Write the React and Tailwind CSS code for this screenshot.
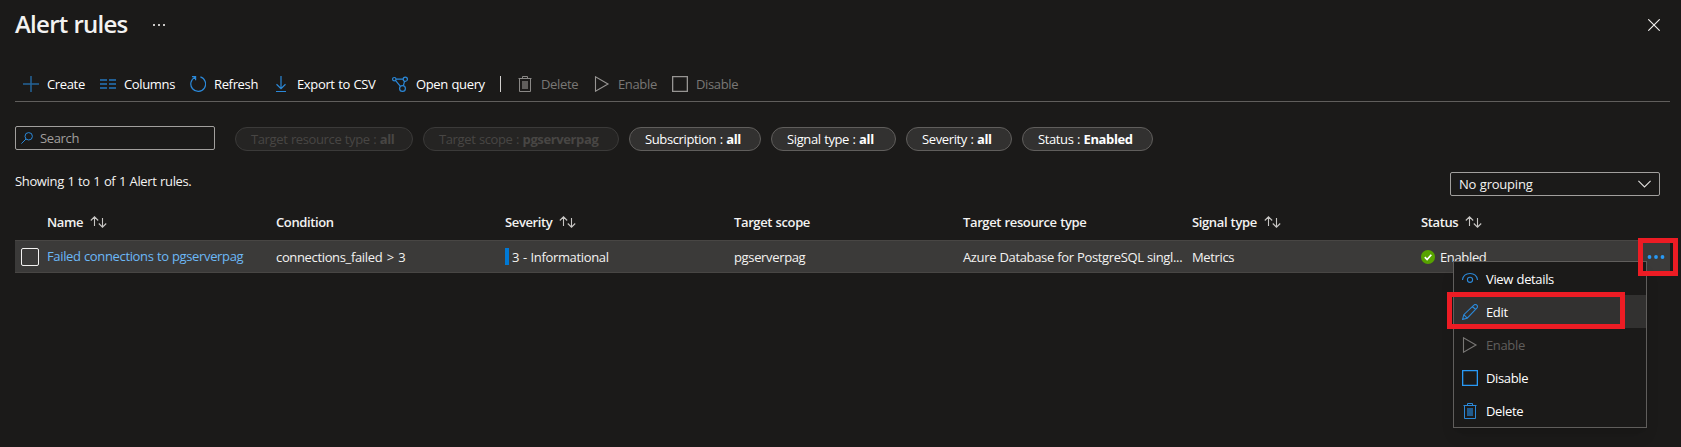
const W = {
  plus: (
    <svg viewBox="0 0 16 16" className="size-4 shrink-0" fill="none" stroke="#246499" strokeWidth="1.5">
      <path d="M8 0v16M0 8h16" />
    </svg>
  ),
  columns: (
    <svg viewBox="0 0 16 16" className="size-4 shrink-0" fill="#225f94">
      <path d="M0 3h7v2H0zM9 3h7v2H9zM0 7h7v2H0zM9 7h7v2H9zM0 11h7v2H0zM9 11h7v2H9z" />
    </svg>
  ),
  refresh: (
    <svg viewBox="0 0 16 16" className="size-4 shrink-0" fill="none" stroke="#2b88d8" strokeWidth="1.2">
      <path d="M10.4 .9A7.4 7.4 0 1 1 5.200 1.200M2 .6h3.600v3.600" />
    </svg>
  ),
  download: (
    <svg viewBox="0 0 16 16" className="size-4 shrink-0" fill="none" stroke="#2b88d8" strokeWidth="1.2">
      <path d="M8 0v12.5M3.5 8.2 8 12.6l4.500-4.400M3 15.500h10" />
    </svg>
  ),
  query: (
    <svg viewBox="0 0 16 16" className="size-4 shrink-0" fill="none" stroke="#2b88d8" strokeWidth="1.2">
      <circle cx="2.300" cy="3.200" r="1.700" />
      <circle cx="13.300" cy="3.200" r="2.100" />
      <circle cx="10.500" cy="12.500" r="2.900" />
      <path d="M4 3.200h7.200M3.500 4.400l4.900 5.900M12.600 5.200l-1.200 4.400" />
    </svg>
  ),
};

function Trash({ line, fill }) {
  return (
    <svg viewBox="0 0 16 16" className="size-4 shrink-0" fill="none" stroke={line}>
      <path d="M1.500 2.500h13M5.500 2.500v-2h5v2M2.500 2.500v13h11v-13" />
      <path d="M5 5h6v8H5z" fill={fill} stroke="none" />
    </svg>
  );
}

function Play({ line }) {
  return (
    <svg viewBox="0 0 16 16" className="size-4 shrink-0" fill="none" stroke={line} strokeWidth="1.1">
      <path d="M1.500 .8v14.400L14 8z" />
    </svg>
  );
}

function Square({ line }) {
  return (
    <svg viewBox="0 0 16 16" className="size-4 shrink-0" fill="none" stroke={line} strokeWidth="1.3">
      <path d="M.65 .65h14.700v14.700H.65z" />
    </svg>
  );
}

function Eye() {
  return (
    <svg viewBox="0 0 16 16" className="size-4 shrink-0" fill="none" stroke="#2b88d8" strokeWidth="1.1">
      <path d="M.5 9C1 4.800 4 2.500 8 2.500S15 4.800 15.500 9" />
      <circle cx="8" cy="8.800" r="2.600" />
    </svg>
  );
}

function Pencil() {
  return (
    <svg viewBox="0 0 16 16" className="size-4 shrink-0" fill="none" stroke="#2b88d8" strokeWidth="1.1">
      <path d="M.6 15.400l1.200-4.700L11.900 1.200a1.900 1.900 0 0 1 2.900 2.900L5.200 14.200zM10.500 2.500l3 3M1.800 10.700l3.400 3.500" />
    </svg>
  );
}

function Sort() {
  return (
    <svg viewBox="0 0 17 12" className="ml-[7px] h-3 w-[17px] shrink-0" fill="none" stroke="#c8c6c4" strokeWidth="1.100">
      <path d="M4.500 10V.8M.8 4.500 4.500.8l3.700 3.700M12.500 2v9.200M8.800 7.500l3.700 3.700 3.700-3.700" />
    </svg>
  );
}

const tools = [
  { icon: W.plus, label: "Create", w: "w-[37px]" },
  { icon: W.columns, label: "Columns", w: "w-[50px]" },
  { icon: W.refresh, label: "Refresh", w: "w-[43px]" },
  { icon: W.download, label: "Export to CSV", w: "w-[79px]" },
  { icon: W.query, label: "Open query", w: "w-[68px]" },
];

const offTools = [
  { icon: <Trash line="#8a8886" fill="#605e5c" />, label: "Delete", w: "w-[37px]" },
  { icon: <Play line="#979593" />, label: "Enable", w: "w-[38px]" },
  { icon: <Square line="#979593" />, label: "Disable", w: "w-[42px]" },
];

const pills = [
  { k: "Target resource type", v: "all", w: "w-[178px]", off: true },
  { k: "Target scope", v: "pgserverpag", w: "w-[196px]", off: true },
  { k: "Subscription", v: "all", w: "w-[132px]" },
  { k: "Signal type", v: "all", w: "w-[125px]" },
  { k: "Severity", v: "all", w: "w-[106px]" },
  { k: "Status", v: "Enabled", w: "w-[131px]" },
];

const heads = [
  ["Name", true],
  ["Condition", false],
  ["Severity", true],
  ["Target scope", false],
  ["Target resource type", false],
  ["Signal type", true],
  ["Status", true],
];

const menu = [
  { icon: <Eye />, label: "View details" },
  { icon: <Pencil />, label: "Edit", active: true },
  { icon: <Play line="#797775" />, label: "Enable", off: true },
  { icon: <Square line="#2899f5" />, label: "Disable" },
  { icon: <Trash line="#2b88d8" fill="#205a8c" />, label: "Delete" },
];

function Tool({ icon, label, w, off }) {
  return (
    <div className="flex items-center gap-2">
      {icon}
      <span className={`${w} ${off ? "text-[#797775]" : "text-white"}`}>{label}</span>
    </div>
  );
}

export default function App() {
  return (
    <div className="relative flex h-[447px] w-[1681px] flex-col overflow-hidden bg-[#1b1a19] pl-[15px] pr-[11px] font-['Open_Sans','Noto_Sans',sans-serif] text-[13px] leading-5 tracking-[-0.35px] [word-spacing:0.5px] whitespace-nowrap text-[#f3f2f1]">
      <header className="flex h-[50px] shrink-0 items-center">
        <h1 className="relative -top-px w-[138px] text-[24px] leading-8 font-semibold tracking-[-0.75px]">Alert rules</h1>
        <svg viewBox="0 0 12 2" className="h-0.5 w-3" fill="#c8c6c4">
          <path d="M0 0h2v2H0zM5 0h2v2H5zM10 0h2v2h-2z" />
        </svg>
        <svg viewBox="0 0 12 12" className="mr-[10px] ml-auto size-3" fill="none" stroke="#f3f2f1" strokeWidth="1.100">
          <path d="M.3 .3l11.400 11.400M11.700 .3.3 11.700" />
        </svg>
      </header>

      <div className="mt-4 flex h-9 shrink-0 items-center gap-4 border-b border-[#605e5c] pl-2">
        {tools.map((t) => (
          <Tool key={t.label} {...t} />
        ))}
        <div className="h-4 w-px bg-[#d2d0ce]" />
        {offTools.map((t) => (
          <Tool key={t.label} {...t} off />
        ))}
      </div>

      <div className="mt-6 flex h-[25px] shrink-0 items-start">
        <div className="mr-5 flex h-6 w-[200px] items-center gap-[7px] rounded-[2px] border border-[#a19f9d] pl-[5px] text-[#a19f9d]">
          <svg viewBox="0 0 12 12" className="size-3" fill="none" stroke="#2b88d8">
            <circle cx="7.700" cy="4.300" r="3.700" />
            <path d="M5 7 .4 11.600" />
          </svg>
          Search
        </div>
        <div className="mt-px flex gap-[10px] tracking-[-0.38px]">
          {pills.map((p) => (
            <div
              key={p.k}
              className={`flex h-6 items-center rounded-full border pl-[15px] ${p.w} ${
                p.off ? "border-[#3b3a39] bg-[#252423] text-[#484644]" : "border-[#605e5c] bg-[#323130] text-white"
              }`}
            >
              <span>
                {p.k} : <b className="font-bold">{p.v}</b>
              </span>
            </div>
          ))}
        </div>
      </div>

      <div className="mt-[20px] flex h-[25px] shrink-0 items-start justify-between">
        <p>Showing 1 to 1 of 1 Alert rules.</p>
        <div className="mt-px mr-[10px] flex h-6 w-[210px] items-center justify-between rounded-[2px] border border-[#a19f9d] pr-[8px] pl-2 tracking-[-0.22px]">
          No grouping
          <svg viewBox="0 0 13 8" className="h-2 w-[13px]" fill="none" stroke="#e1dfdd" strokeWidth="1.100">
            <path d="M.4 .8l6.100 6.100L12.600 .8" />
          </svg>
        </div>
      </div>

      <div className="mt-4 grid h-7 shrink-0 grid-cols-[repeat(7,229px)] items-start pl-8 font-semibold tracking-[-0.38px]">
        {heads.map(([h, sortable]) => (
          <div key={h} className="flex h-5 items-center">
            {h}
            {sortable && <Sort />}
          </div>
        ))}
      </div>

      <div className="flex h-[33px] shrink-0 items-center border-y border-[#484644] bg-[#3b3a39] pl-1.5">
        <div className="mr-2 size-[18px] rounded-[2px] border border-[#f3f2f1]" />
        <div className="grid grid-cols-[repeat(7,229px)] items-center">
          <a className="pb-0.5 text-[#6cb8f6] [word-spacing:0.3px]">Failed connections to pgserverpag</a>
          <span className="[word-spacing:1.5px]">connections_failed &gt; 3</span>
          <span className="flex items-center gap-[3px]">
            <i className="h-[17px] w-1 bg-[#0078d4]" />
            <span className="[word-spacing:0.8px]">3 - Informational</span>
          </span>
          <span>pgserverpag</span>
          <span className="[word-spacing:0.3px]">Azure Database for PostgreSQL singl...</span>
          <span>Metrics</span>
          <span className="flex items-center gap-[5px]">
            <svg viewBox="0 0 14 14" className="size-3.5">
              <circle cx="7" cy="7" r="7" fill="#57a300" />
              <path d="M3.800 7.200l2.300 2.300 4.200-4.800" fill="none" stroke="#fff" strokeWidth="1.700" />
            </svg>
            <span className="mt-px">Enabled</span>
          </span>
        </div>
      </div>

      <div className="absolute top-[261px] left-[1453px] flex w-[194px] flex-col border border-[#605e5c] bg-[#1b1a19] shadow-lg">
        {menu.map((m) => (
          <div
            key={m.label}
            className={`flex h-[33px] items-center gap-2 pl-2 ${m.active ? "bg-[#323130]" : ""} ${
              m.off ? "text-[#605e5c]" : "font-medium text-white"
            }`}
          >
            {m.icon}
            {m.label}
          </div>
        ))}
      </div>
      <div className="absolute top-[292px] left-[1447px] h-[37px] w-[178px] border-[5px] border-[#ed1c24]" />
      <div className="absolute top-[238px] left-[1638px] flex h-[38px] w-10 items-center border-[5px] border-[#ed1c24] pl-1">
        <svg viewBox="0 0 18 4" className="-mt-px h-1 w-[18px]" fill="#2899f5">
          <circle cx="2.500" cy="2" r="1.900" />
          <circle cx="9" cy="2" r="1.900" />
          <circle cx="15.500" cy="2" r="1.900" />
        </svg>
      </div>
    </div>
  );
}
